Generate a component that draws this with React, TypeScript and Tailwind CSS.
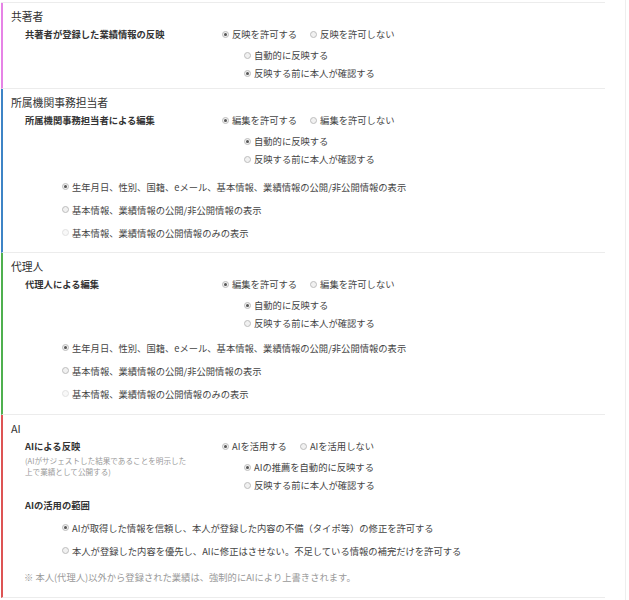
import React from 'react';

type RadioProps = { checked?: boolean; disabled?: boolean; label: string };

const Radio: React.FC<RadioProps> = ({ checked, disabled, label }) => (
  <span className="inline-flex items-center">
    <span
      className={`w-[7px] h-[7px] rounded-full border flex items-center justify-center shrink-0 ${
        disabled ? 'border-[#e2e2e2] bg-[#f8f8f8]' : 'border-[#bdbdbd] bg-[#f1f1f1]'
      }`}
    >
      {checked && <span className="w-[3px] h-[3px] rounded-full bg-[#555]" />}
    </span>
    <span className="ml-[3px] text-[#444]">{label}</span>
  </span>
);

type ChoiceBlock = {
  label: string;
  note?: string[];
  main: [string, string];
  sub: [string, string];
  subChecked: 0 | 1;
};

const Choice: React.FC<{ block: ChoiceBlock }> = ({ block }) => (
  <div className="flex pl-[14px]">
    <div className="w-[197px] shrink-0">
      <div className="h-[18px] flex items-center font-bold text-[#333]">{block.label}</div>
      {block.note && (
        <div className="text-[7.6px] leading-[11px] text-[#999]">
          {block.note.map((n) => (
            <div key={n}>{n}</div>
          ))}
        </div>
      )}
    </div>
    <div>
      <div className="h-[18px] flex items-center gap-[13px]">
        <Radio checked label={block.main[0]} />
        <Radio label={block.main[1]} />
      </div>
      <div className="pl-[22px] mt-[3px]">
        <div className="h-[18px] flex items-center">
          <Radio checked={block.subChecked === 0} label={block.sub[0]} />
        </div>
        <div className="h-[18px] flex items-center">
          <Radio checked={block.subChecked === 1} label={block.sub[1]} />
        </div>
      </div>
    </div>
  </div>
);

const scopeOptions = [
  '生年月日、性別、国籍、eメール、基本情報、業績情報の公開/非公開情報の表示',
  '基本情報、業績情報の公開/非公開情報の表示',
  '基本情報、業績情報の公開情報のみの表示',
];

const ScopeList: React.FC<{ mt: string }> = ({ mt }) => (
  <div className={`pl-[51px] ${mt}`}>
    {scopeOptions.map((o, i) => (
      <div key={o} className="h-[23px] flex items-center">
        <Radio checked={i === 0} disabled={i === 2} label={o} />
      </div>
    ))}
  </div>
);

const Section: React.FC<{ title: string; bar: string; pb: string; children: React.ReactNode }> = ({
  title,
  bar,
  pb,
  children,
}) => (
  <section className={`border-l-2 border-b border-b-[#ececec] pl-[8px] ${bar} ${pb}`}>
    <h2 className="h-[22px] pt-[5px] leading-[16px] text-[10.8px] text-[#333]">{title}</h2>
    {children}
  </section>
);

export default function App() {
  return (
    <div
      className="w-[626px] min-h-[600px] bg-white border-r border-r-[#eeeeee] pl-[1px] pt-[2px] text-[9.3px] leading-[18px]"
      style={{ fontFamily: '"Noto Sans CJK JP", "Noto Sans", sans-serif' }}
    >
      <div className="w-[604px] border-t border-t-[#ececec]">
        <Section title="共著者" bar="border-l-[#e683e6]" pb="pb-[6px]">
          <Choice
            block={{
              label: '共著者が登録した業績情報の反映',
              main: ['反映を許可する', '反映を許可しない'],
              sub: ['自動的に反映する', '反映する前に本人が確認する'],
              subChecked: 1,
            }}
          />
        </Section>

        <Section title="所属機関事務担当者" bar="border-l-[#3d84c6]" pb="pb-[8px]">
          <Choice
            block={{
              label: '所属機関事務担当者による編集',
              main: ['編集を許可する', '編集を許可しない'],
              sub: ['自動的に反映する', '反映する前に本人が確認する'],
              subChecked: 0,
            }}
          />
          <ScopeList mt="mt-[7px]" />
        </Section>

        <Section title="代理人" bar="border-l-[#4fb04f]" pb="pb-[9px]">
          <Choice
            block={{
              label: '代理人による編集',
              main: ['編集を許可する', '編集を許可しない'],
              sub: ['自動的に反映する', '反映する前に本人が確認する'],
              subChecked: 0,
            }}
          />
          <ScopeList mt="mt-[4px]" />
        </Section>

        <Section title="AI" bar="border-l-[#dd5454]" pb="pb-[11px]">
          <Choice
            block={{
              label: 'AIによる反映',
              note: ['(AIがサジェストした結果であることを明示した', '上で業績として公開する)'],
              main: ['AIを活用する', 'AIを活用しない'],
              sub: ['AIの推薦を自動的に反映する', '反映する前に本人が確認する'],
              subChecked: 0,
            }}
          />
          <div className="pl-[14px] mt-[2px] h-[18px] flex items-center font-bold text-[#333]">
            AIの活用の範囲
          </div>
          <div className="pl-[51px] mt-[2px]">
            <div className="h-[23px] flex items-center">
              <Radio checked label="AIが取得した情報を信頼し、本人が登録した内容の不備（タイポ等）の修正を許可する" />
            </div>
            <div className="h-[23px] flex items-center">
              <Radio label="本人が登録した内容を優先し、AIに修正はさせない。不足している情報の補完だけを許可する" />
            </div>
          </div>
          <p className="pl-[13px] mt-[6px] h-[18px] flex items-center text-[#999]">
            ※ 本人(代理人)以外から登録された業績は、強制的にAIにより上書きされます。
          </p>
        </Section>
      </div>
    </div>
  );
}
